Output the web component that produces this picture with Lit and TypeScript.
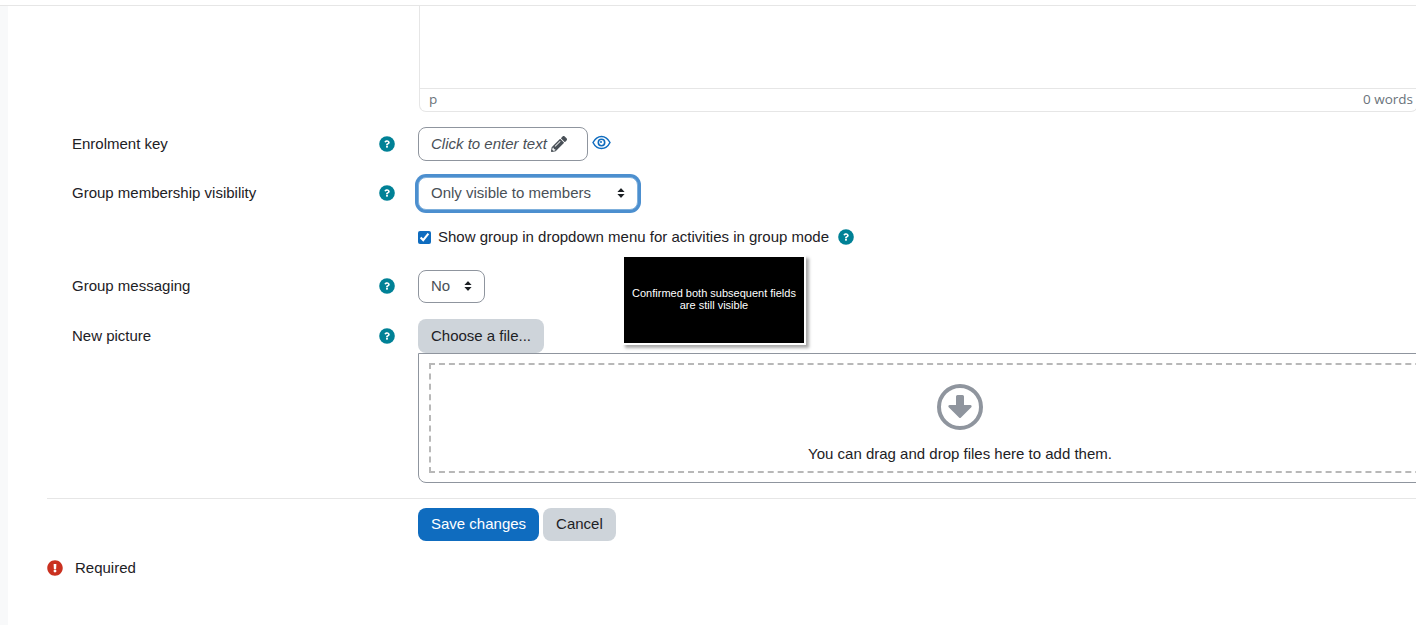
import { LitElement, html, css, svg } from "lit";
import { customElement } from "lit/decorators.js";

const Q_MARK = "M262.655 90c-54.497 0-89.255 22.957-116.549 63.758-3.536 5.286-2.353 12.415 2.715 16.258l34.699 26.31c5.205 3.947 12.621 3.008 16.665-2.122 17.864-22.658 30.113-35.797 57.303-35.797 20.429 0 45.698 13.148 45.698 32.958 0 14.976-12.363 22.667-32.534 33.976C247.128 238.528 216 254.941 216 296v4c0 6.627 5.373 12 12 12h56c6.627 0 12-5.373 12-12v-1.333c0-28.462 83.186-29.647 83.186-106.667 0-58.002-60.165-102-116.531-102zM256 338c-25.365 0-46 20.635-46 46 0 25.364 20.635 46 46 46s46-20.636 46-46c0-25.365-20.635-46-46-46z";
const EX = "M504 256c0 136.997-111.043 248-248 248S8 392.997 8 256C8 119.083 119.043 8 256 8s248 111.083 248 248zm-248 50c-25.405 0-46 20.595-46 46s20.595 46 46 46 46-20.595 46-46-20.595-46-46-46zm-43.673-165.346l7.418 136c.347 6.364 5.609 11.346 11.982 11.346h48.546c6.373 0 11.635-4.982 11.982-11.346l7.418-136c.375-6.874-5.098-12.654-11.982-12.654h-63.383c-6.884 0-12.356 5.78-11.981 12.654z";
const PENCIL = "M497.9 142.1l-46.1 46.1c-4.7 4.7-12.3 4.7-17 0l-111-111c-4.7-4.7-4.7-12.3 0-17l46.1-46.1c18.7-18.7 49.1-18.7 67.9 0l60.1 60.1c18.8 18.7 18.8 49.1 0 67.9zM284.2 99.8L21.6 362.4.4 483.9c-2.9 16.4 11.4 30.6 27.8 27.8l121.5-21.3 262.6-262.6c4.7-4.7 4.7-12.3 0-17l-111-111c-4.8-4.7-12.4-4.7-17.1 0zM124.1 339.9c-5.5-5.5-5.5-14.3 0-19.8l154-154c5.5-5.5 14.3-5.5 19.8 0s5.5 14.3 0 19.8l-154 154c-5.5 5.5-14.3 5.5-19.8 0zM88 424h48v36.3l-64.5 11.3-31.1-31.1L51.7 376H88v48z";

const help = svg`<svg class="help" viewBox="0 0 512 512" width="16" height="16" aria-hidden="true"><circle cx="256" cy="256" r="250" fill="#008196"/><path fill="#fff" transform="translate(256 256) scale(.72) translate(-256 -260)" d="${Q_MARK}"/></svg>`;
const sort = svg`<svg class="sort" viewBox="0 0 8 10" width="8" height="10" aria-hidden="true"><path fill="#1d2125" d="M.4 4.1 3.6.5a.5.5 0 0 1 .8 0l3.2 3.6zM.4 5.9h7.2L4.4 9.5a.5.5 0 0 1-.8 0z"/></svg>`;

@customElement("app-root")
export class AppRoot extends LitElement {
  static styles = css`
    :host {
      display: block;
      position: relative;
      width: 1416px;
      height: 625px;
      overflow: hidden;
      background: #fff;
      font-family: "Liberation Sans", Arial, sans-serif;
      font-size: 15px;
      line-height: 22.5px;
      color: #1d2125;
    }
    .page {
      display: flex;
      height: 625px;
      box-sizing: border-box;
      padding-top: 5px;
    }
    .strip { width: 8px; background: #f8f9fa; }
    .main {
      flex: 1;
      min-width: 0;
      padding-left: 39px;
      position: relative;
    }
    .topline {
      height: 1px;
      background: #e6e6e6;
      margin-left: -47px;
    }
    .row {
      display: grid;
      grid-template-columns: 371px 1fr;
    }
    .label {
      display: flex;
      justify-content: space-between;
      align-items: center;
      padding-left: 25px;
      padding-right: 23px;
      height: 33.5px;
    }
    .help { display: block; }
    .editor {
      width: 999px;
      margin-left: 1px;
      height: 106px;
      box-sizing: border-box;
      border: 1px solid #e6e6e6;
      border-top: 0;
      border-radius: 0 0 7px 7px;
      display: flex;
      flex-direction: column;
      justify-content: flex-end;
      margin-bottom: 15px;
    }
    .status {
      height: 23px;
      box-sizing: border-box;
      border-top: 1px solid #e6e6e6;
      display: flex;
      justify-content: space-between;
      align-items: center;
      padding: 0 4px 2px 9px;
      font-family: "Open Sans", "DejaVu Sans", sans-serif;
      font-size: 13.5px;
      color: #6a737b;
    }
    .field-line { display: flex; align-items: flex-start; }
    .gap-a { margin-bottom: 16px; }
    .gap-b { margin-bottom: 16px; }
    .inplace {
      width: 170px;
      height: 33.5px;
      box-sizing: border-box;
      border: 1px solid #8f959e;
      border-radius: 8px;
      display: flex;
      align-items: center;
      padding-left: 12px;
      font-style: italic;
      color: #495057;
      gap: 4px;
    }
    .eye { margin: 8px 0 0 4px; display: block; }
    .select {
      box-sizing: border-box;
      height: 33.5px;
      border: 1px solid #8f959e;
      border-radius: 8px;
      display: flex;
      align-items: center;
      justify-content: space-between;
      padding: 0 12px;
      color: #495057;
      background: #fff;
    }
    .select.focus {
      width: 220px;
      border-color: #7fb0dc;
      box-shadow: 0 0 0 3px #4c8fcf;
    }
    .select.no { width: 67px; }
    .check {
      display: flex;
      align-items: center;
      height: 22px;
      margin: 16px 0 21.5px;
    }
    .check input {
      width: 13px;
      height: 13px;
      margin: 0 7px 0 0;
      accent-color: #0f6cbf;
    }
    .check .help { margin-left: 9px; }
    .filebtn {
      display: block;
      width: 126px;
      height: 34px;
      box-sizing: border-box;
      border: 0;
      border-radius: 8px;
      background: #ced4da;
      font: inherit;
      color: #1d2125;
      padding: 0;
    }
    .filearea {
      width: 1084px;
      height: 129.5px;
      box-sizing: border-box;
      border: 1px solid #8f959e;
      border-radius: 0 0 8px 8px;
      padding: 9px 10px;
    }
    .dash {
      height: 100%;
      box-sizing: border-box;
      border: 2px dashed #b8b8b8;
      display: flex;
      flex-direction: column;
      align-items: center;
      padding-top: 19px;
    }
    .dash svg { display: block; margin-bottom: 13px; }
    hr {
      border: 0;
      height: 1px;
      background: #e6e6e6;
      margin: 15px 0 9.5px;
    }
    .buttons { display: flex; gap: 4px; }
    .btn {
      height: 33px;
      box-sizing: border-box;
      border: 0;
      border-radius: 8px;
      font: inherit;
      padding: 0 13px;
    }
    .primary { background: #0f6cbf; color: #fff; }
    .secondary { background: #ced4da; color: #1d2125; }
    .required {
      display: flex;
      align-items: center;
      gap: 12px;
      margin-top: 15.5px;
    }
    .required svg { display: block; }
    .note {
      position: absolute;
      left: 624px;
      top: 257px;
      width: 180px;
      height: 86px;
      padding-bottom: 2px;
      background: #000;
      box-shadow: 0 0 0 2px #fff, 3px 3px 3px 2px #aaa;
      color: #fff;
      font-size: 11px;
      line-height: 12px;
      text-align: center;
      display: flex;
      align-items: center;
      justify-content: center;
      box-sizing: border-box;
    }
  `;

  private row(label: string, field: unknown) {
    return html`<div class="row">
      <div class="label"><span>${label}</span>${help}</div>
      <div>${field}</div>
    </div>`;
  }

  render() {
    return html`
      <div class="page">
        <div class="strip"></div>
        <div class="main">
          <div class="topline"></div>
          <div class="row">
            <div></div>
            <div class="editor">
              <div class="status"><span>p</span><span>0 words</span></div>
            </div>
          </div>
          <div class="gap-a">
            ${this.row(
              "Enrolment key",
              html`<div class="field-line">
                <div class="inplace">
                  <span>Click to enter text</span>
                  <svg viewBox="0 0 512 512" width="16" height="16" aria-hidden="true"><path fill="#495057" d="${PENCIL}"/></svg>
                </div>
                <svg class="eye" viewBox="0 0 19 15" width="19" height="15" aria-hidden="true">
                  <path fill="none" stroke="#0f6cbf" stroke-width="1.5" d="M1 7.5C2.8 4 5.8 1.4 9.5 1.4S16.2 4 18 7.5c-1.8 3.5-4.8 6.1-8.5 6.1S2.8 11 1 7.5z"/>
                  <circle cx="9.5" cy="7.5" r="3.2" fill="none" stroke="#0f6cbf" stroke-width="1.6"/>
                  <circle cx="9" cy="7" r="1" fill="#0f6cbf"/>
                </svg>
              </div>`
            )}
          </div>
          ${this.row(
            "Group membership visibility",
            html`<div class="select focus"><span>Only visible to members</span>${sort}</div>`
          )}
          <div class="row">
            <div></div>
            <label class="check">
              <input type="checkbox" checked />
              <span>Show group in dropdown menu for activities in group mode</span>
              ${help}
            </label>
          </div>
          <div class="gap-b">
            ${this.row("Group messaging", html`<div class="select no"><span>No</span>${sort}</div>`)}
          </div>
          ${this.row(
            "New picture",
            html`<button class="filebtn">Choose a file...</button>
              <div class="filearea">
                <div class="dash">
                  <svg viewBox="0 0 46 46" width="46" height="46" aria-hidden="true">
                    <circle cx="23" cy="23" r="21" fill="none" stroke="#8f959e" stroke-width="4"/>
                    <path fill="#8f959e" d="M19 12.5a1.5 1.5 0 0 1 1.5-1.5h5a1.5 1.5 0 0 1 1.5 1.5V21h6.3c1.2 0 1.8 1.4 1 2.3L24 33.4a1.4 1.4 0 0 1-2 0L11.7 23.3c-.8-.9-.2-2.3 1-2.3H19z"/>
                  </svg>
                  <span>You can drag and drop files here to add them.</span>
                </div>
              </div>`
          )}
          <hr />
          <div class="row">
            <div></div>
            <div class="buttons">
              <button class="btn primary">Save changes</button>
              <button class="btn secondary">Cancel</button>
            </div>
          </div>
          <div class="required">
            <svg viewBox="0 0 512 512" width="16" height="16" aria-hidden="true"><path fill="#ca3120" d="${EX}"/></svg>
            <span>Required</span>
          </div>
        </div>
      </div>
      <div class="note"><span>Confirmed both subsequent fields<br />are still visible</span></div>
    `;
  }
}
